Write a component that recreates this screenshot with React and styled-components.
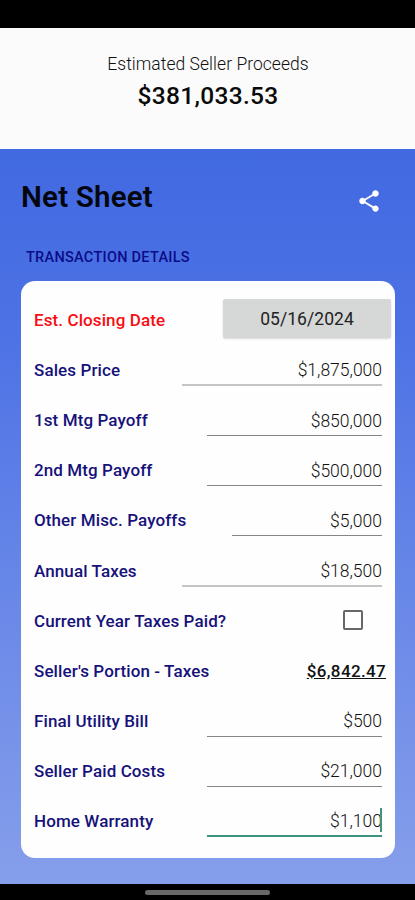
import React from "react";
import styled, { createGlobalStyle } from "styled-components";

const FIELDS = [
  { label: "Sales Price", value: "$1,875,000", width: 200, soft: true },
  { label: "1st Mtg Payoff", value: "$850,000", width: 175 },
  { label: "2nd Mtg Payoff", value: "$500,000", width: 175 },
  { label: "Other Misc. Payoffs", value: "$5,000", width: 150 },
  { label: "Annual Taxes", value: "$18,500", width: 200, soft: true },
];

const COSTS = [
  { label: "Final Utility Bill", value: "$500", width: 175 },
  { label: "Seller Paid Costs", value: "$21,000", width: 175 },
  { label: "Home Warranty", value: "$1,100", width: 175, focused: true },
];

const FieldRow = ({ label, value, width, soft, focused }) => (
  <Row>
    <Label>{label}</Label>
    <Field $width={width} $soft={soft} $focused={focused}>
      {value}
      {focused && <Caret />}
    </Field>
  </Row>
);

const App = () => {
  return (
    <Screen>
      <GlobalStyle />
      <StatusBar />
      <Summary>
        <SummaryLabel>Estimated Seller Proceeds</SummaryLabel>
        <SummaryValue>$381,033.53</SummaryValue>
      </Summary>
      <Content>
        <Header>
          <Title>Net Sheet</Title>
          <ShareButton aria-label="Share">
            <svg width="26" height="26" viewBox="0 0 24 24" fill="#fff">
              <path d="M18 16.08c-.76 0-1.44.3-1.96.77L8.91 12.7c.05-.23.09-.46.09-.7s-.04-.47-.09-.7l7.05-4.11c.54.5 1.25.81 2.04.81 1.66 0 3-1.34 3-3s-1.34-3-3-3-3 1.34-3 3c0 .24.04.47.09.7L8.04 9.81C7.5 9.31 6.79 9 6 9c-1.66 0-3 1.34-3 3s1.34 3 3 3c.79 0 1.5-.31 2.04-.81l7.12 4.16c-.05.21-.08.43-.08.65 0 1.61 1.31 2.92 2.92 2.92s2.92-1.31 2.92-2.92-1.31-2.92-2.92-2.92z" />
            </svg>
          </ShareButton>
        </Header>
        <SectionTitle>TRANSACTION DETAILS</SectionTitle>
        <Card>
          <Row>
            <Label $color="#f80d12">Est. Closing Date</Label>
            <DateButton>05/16/2024</DateButton>
          </Row>
          {FIELDS.map((field) => (
            <FieldRow key={field.label} {...field} />
          ))}
          <Row>
            <Label>Current Year Taxes Paid?</Label>
            <Checkbox role="checkbox" aria-checked="false" />
          </Row>
          <Row>
            <Label>Seller's Portion - Taxes</Label>
            <Total>$6,842.47</Total>
          </Row>
          {COSTS.map((field) => (
            <FieldRow key={field.label} {...field} />
          ))}
        </Card>
      </Content>
      <NavBar>
        <NavHandle />
      </NavBar>
    </Screen>
  );
};

export default App;

const GlobalStyle = createGlobalStyle`
  * {
    box-sizing: border-box;
  }

  body {
    margin: 0;
    background: #000;
    font-family: Roboto, sans-serif;
  }
`;

const Screen = styled.div`
  width: 415px;
  height: 900px;
  display: flex;
  flex-direction: column;
  overflow: hidden;
  background: #000;
`;

const StatusBar = styled.div`
  height: 28px;
  flex: none;
  background: #000;
`;

const Summary = styled.div`
  height: 121px;
  flex: none;
  display: flex;
  flex-direction: column;
  align-items: center;
  padding-top: 25px;
  background: #fbfbfb;
`;

const SummaryLabel = styled.div`
  font-size: 17.5px;
  line-height: 22px;
  font-weight: 300;
  letter-spacing: 0.04px;
  padding-left: 1px;
  color: #111;
`;

const SummaryValue = styled.div`
  margin-top: 6px;
  padding-left: 1px;
  font-size: 24.5px;
  line-height: 30px;
  font-weight: 500;
  letter-spacing: 0.3px;
  color: #0a0a0a;
`;

const Content = styled.div`
  height: 735px;
  flex: none;
  padding: 0 20px 0 21px;
  background: linear-gradient(#4169e1, #4d72e5 25%, #869feb);
`;

const Header = styled.div`
  height: 96px;
  display: flex;
  align-items: center;
  justify-content: space-between;
  padding-right: 13px;
`;

const Title = styled.h1`
  margin: 0;
  font-size: 29.5px;
  line-height: 34px;
  font-weight: 600;
  letter-spacing: 0.2px;
  color: #04060f;
`;

const ShareButton = styled.button`
  margin-top: 8px;
  padding: 0;
  border: none;
  background: none;
  display: flex;
`;

const SectionTitle = styled.h2`
  height: 36px;
  margin: 0;
  padding: 3px 5px 0;
  font-size: 14.5px;
  line-height: 20px;
  font-weight: 500;
  letter-spacing: 0.28px;
  color: #0b0c88;
`;

const Card = styled.div`
  height: 577px;
  padding: 14px 0 0 13px;
  border-radius: 14px;
  background: #fefefe;
`;

const Row = styled.div`
  height: 50.1px;
  display: flex;
  align-items: center;
  justify-content: space-between;
`;

const Label = styled.span`
  font-size: 17px;
  line-height: 22px;
  font-weight: 500;
  letter-spacing: 0.1px;
  white-space: nowrap;
  color: ${({ $color }) => $color || "#16127a"};
`;

const Field = styled.div`
  width: ${({ $width }) => $width}px;
  height: 32px;
  flex: none;
  display: flex;
  align-items: center;
  justify-content: flex-end;
  margin-right: 13px;
  padding-top: 2px;
  border-bottom: ${({ $soft, $focused }) =>
    $focused ? "2px solid #3f927e" : $soft ? "2px solid #c4c4c4" : "1px solid #858585"};
  font-size: 17.5px;
  font-weight: 300;
  color: #111;
`;

const Caret = styled.span`
  width: 2px;
  height: 24px;
  margin: -2px 0 0 -2px;
  background: #3f927e;
`;

const DateButton = styled.button`
  width: 168px;
  height: 39px;
  margin: -4px 4px 0 0;
  padding: 1px 0 0;
  border: none;
  border-radius: 2px;
  background: #d6d8d7;
  box-shadow: 0 1px 2px rgba(0, 0, 0, 0.15);
  font-family: inherit;
  font-size: 17.5px;
  letter-spacing: 0.05px;
  color: #222;
`;

const Checkbox = styled.span`
  width: 20px;
  height: 20px;
  margin: -2px 32px 0 0;
  border: 2px solid #666;
  border-radius: 2px;
`;

const Total = styled.span`
  margin-right: 9px;
  font-size: 17px;
  font-weight: 500;
  letter-spacing: 0.35px;
  text-decoration: underline;
  color: #111;
`;

const NavBar = styled.div`
  height: 16px;
  flex: none;
  display: flex;
  justify-content: center;
  padding-top: 6px;
  background: #000;
`;

const NavHandle = styled.div`
  width: 125px;
  height: 5px;
  border-radius: 3px;
  background: #686868;
`;
